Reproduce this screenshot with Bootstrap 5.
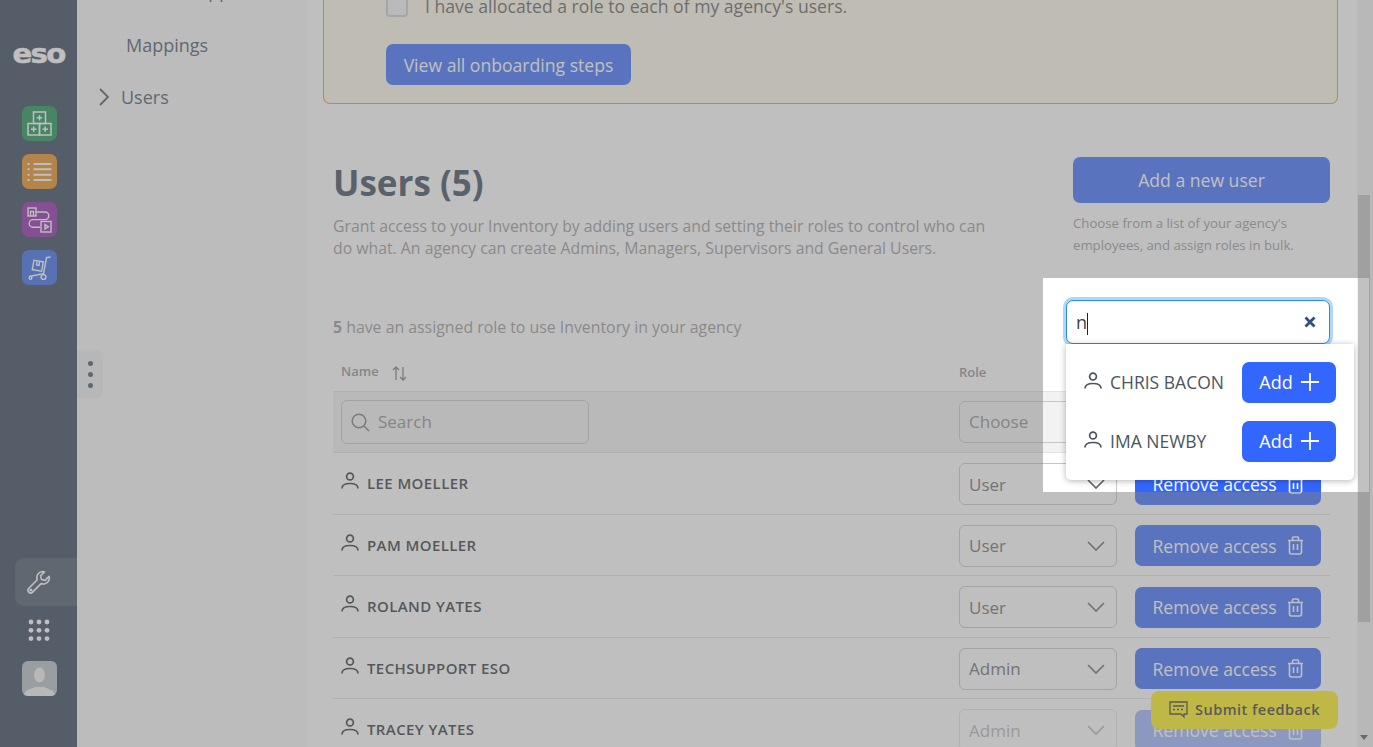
<!DOCTYPE html>
<html lang="en">
<head>
<meta charset="UTF-8">
<title>Users</title>
<link href="https://cdn.jsdelivr.net/npm/bootstrap@5.3.3/dist/css/bootstrap.min.css" rel="stylesheet">
<style>
html, body { height: 100%; overflow: hidden; }
body { font-family: "Open Sans", "Liberation Sans", sans-serif; color: #324456; background: #fff; }
.app-shell { height: 747px; overflow: hidden; position: relative; }
.side-rail { width: 77px; background: #2a3c50; position: relative; }
.rail-logo { font-family: "DejaVu Sans", sans-serif; font-weight: 700; font-size: 26px; line-height: 26px; color: #fff; letter-spacing: -1.5px; text-align: center; margin-top: 41px; transform: scaleX(1.12); -webkit-text-stroke: .5px #fff; }
.rail-app { width: 35px; height: 35px; border-radius: 7px; margin-left: 22px; margin-bottom: 13px; display: flex; align-items: center; justify-content: center; }
.rail-apps { margin-top: 39px; }
.rail-bottom { position: absolute; left: 0; right: 0; top: 558px; }
.rail-tool { margin-left: 15px; height: 48px; border-radius: 9px 0 0 9px; background: #3f5063; padding-left: 12px; display: flex; align-items: center; }
.rail-dots { margin: 13px 0 20px 28px; display: block; }
.rail-avatar { width: 35px; height: 35px; border-radius: 6px; margin-left: 22px; background: #b5bcc0; overflow: hidden; }
.sub-nav { width: 230px; background: #f9f9fb; position: relative; font-size: 18px; color: #3e5060; }
.sub-item { height: 52px; display: flex; align-items: center; }
.sub-cut { margin-top: -33px; padding-bottom: 4px; }
.drag-handle { position: absolute; left: 0; top: 350px; width: 26px; height: 48px; background: #eceef0; border-radius: 0 7px 7px 0; display: flex; flex-direction: column; align-items: center; justify-content: center; gap: 6px; }
.drag-handle span { width: 5px; height: 5px; border-radius: 50%; background: #3e5060; }
.main-pane { width: 1050px; }
.ob-panel { margin: -28px 19px 0 16px; height: 132px; background: #fff8e8; border: 1px solid #d89c34; border-radius: 0 0 7px 7px; border-top: 0; padding: 21px 0 0 62px; font-size: 17.6px; color: #5a5a5a; }
.ob-check { width: 22px; height: 22px; border: 2px solid #c9ccd0; border-radius: 4px; background: #f4f4f4; margin-right: 17px; }
.btn-blue { background: #36f; color: #fff; border: 0; border-radius: 7px; font-size: 17.6px; line-height: 24px; }
.ob-btn { margin-top: 25px; width: 245px; height: 41px; }
.users-wrap { padding: 53px 27px 0 26px; }
.users-title { font-size: 35px; font-weight: 700; line-height: 49px; margin: 1px 0 0; }
.users-desc { font-size: 15.8px; line-height: 22px; color: #949494; margin: 8px 0 0; width: 670px; }
.add-user-btn { width: 257px; height: 46px; }
.add-user-note { font-size: 13.2px; line-height: 22px; color: #949494; margin: 9px 0 0; }
.assign-line { font-size: 15.85px; color: #949494; margin-top: 57px; line-height: 22px; }
.col-name { flex: 1 1 auto; padding-left: 8px; }
.col-role { width: 176px; flex: none; }
.col-act { width: 195px; flex: none; }
.head-row { height: 38px; margin-top: 15px; font-size: 13px; font-weight: 600; color: #8d8d8d; }
.head-row .col-role { padding-top: 2px; }
.sort-icon { margin: 2px 0 0 5px; }
.filter-row { height: 62px; background: #f2f2f2; border-top: 1px solid #e3e3e3; border-bottom: 1px solid #e3e3e3; }
.user-row { height: 61.5px; border-bottom: 1px solid #e3e3e3; font-size: 15px; font-weight: 550; letter-spacing: .4px; color: #2a2f35; }
.user-row .col-role, .user-row .col-act { padding-top: 2px; }
.user-icon { margin-top: -4px; }
.field-box { height: 42px; border: 1px solid #c3c6ca; border-radius: 6px; background: #fff; font-size: 17px; font-weight: 400; letter-spacing: 0; color: #666; padding: 0 9px; display: flex; align-items: center; }
.filter-row .field-box { background: #f2f2f2; color: #8a8a8a; }
.search-box { width: 248px; height: 44px; }
.role-box { width: 158px; justify-content: space-between; padding-right: 11px; }
.remove-btn { width: 186px; height: 41px; display: flex; align-items: center; justify-content: center; gap: 10px; }
.row-faded { opacity: .5; }
.feedback-btn { position: absolute; left: 1151px; top: 691px; width: 187px; height: 38px; background: #fff00c; border-radius: 8px; color: #333; font-size: 14.5px; font-weight: 600; letter-spacing: .5px; display: flex; align-items: center; justify-content: center; gap: 7px; }
.scroll-track { width: 16px; background: #f1f1f1; position: relative; }
.scroll-thumb { position: absolute; left: 1px; width: 12px; top: 195px; height: 427px; background: #c1c1c1; }
.scroll-arrow { position: absolute; left: 3px; bottom: 7px; border: 4px solid transparent; border-top: 5px solid #505050; border-bottom: 0; }
.spotlight { position: absolute; left: 1043px; top: 278px; width: 326px; height: 214px; box-shadow: 0 0 0 2000px rgba(128,128,128,.5); }
.spot-input { position: absolute; left: 23px; top: 22px; width: 264px; height: 44px; background: #fff; border: 1px solid #2e8bd8; border-radius: 7px; box-shadow: 0 0 0 3px #aed8f7; font-size: 18px; color: #444; display: flex; align-items: center; justify-content: space-between; padding: 0 13px 0 9px; }
.spot-caret { display: inline-block; width: 1px; height: 22px; background: #222; vertical-align: middle; }
.spot-menu { position: absolute; left: 23px; top: 66px; width: 288px; height: 136px; background: #fff; border-radius: 0 0 5px 5px; box-shadow: 0 1px 6px rgba(0,0,0,.3); padding: 18px 18px 0 18px; }
.spot-item { height: 41px; margin-bottom: 18px; font-size: 17.5px; color: #4c5561; display: flex; align-items: center; }
.spot-item > svg { margin-top: -3px; }
.spot-add { width: 94px; height: 41px; margin-left: auto; padding-bottom: 2px; font-size: 18px; display: flex; align-items: center; justify-content: center; gap: 8px; }
</style>
</head>
<body>
<div class="app-shell">
  <div class="d-flex h-100">
    <!-- app rail -->
    <div class="side-rail flex-shrink-0">
      <div class="rail-logo">eso</div>
      <div class="rail-apps">
        <div class="rail-app" style="background:#0f8a4a">
          <svg width="25" height="25" viewBox="0 0 25 25" fill="none" stroke="#fff" stroke-width="1.500"><rect x="6.500" y="1" width="12" height="11.500"/><rect x="1" y="12.500" width="11.500" height="11.500"/><rect x="12.500" y="12.500" width="11.500" height="11.500"/><path d="M12.500 4v5.500M9.700 6.700h5.500M6.700 15.500v5.500M4 18.200h5.500M18.200 15.500v5.500M15.500 18.200h5.500"/></svg>
        </div>
        <div class="rail-app" style="background:#e68a14">
          <svg width="25" height="20" viewBox="0 0 25 20" fill="none" stroke="#fff" stroke-width="2"><path d="M6.500 2h18M6.500 7.300h18M6.500 12.700h18M6.500 18h18"/><path d="M0.500 2h2M0.500 7.300h2M0.500 12.700h2M0.500 18h2"/></svg>
        </div>
        <div class="rail-app" style="background:#8a1fa8">
          <svg width="25" height="26" viewBox="0 0 25 26" fill="none" stroke="#fff" stroke-width="1.400"><rect x="1" y="1" width="8" height="8"/><path d="M3.500 9V4.500h3V9"/><path d="M9 5h9a3.800 3.800 0 0 1 0 7.600H6a3.800 3.800 0 0 0 0 7.600h7"/><rect x="14" y="14.500" width="10" height="10.500"/><path d="M18 17.500v4.500l3.400-2.200z"/></svg>
        </div>
        <div class="rail-app" style="background:#2e62e6">
          <svg width="25" height="26" viewBox="0 0 25 26" fill="none" stroke="#fff" stroke-width="1.400"><path d="M23.500 2l-4 .6-3 16L2 21.500"/><rect x="6" y="6" width="9.500" height="9.500" transform="rotate(10 11 11)"/><path d="M10 6.500l-.5 3.500 2.500.4.500-3.500"/><circle cx="16.500" cy="22" r="2.400"/><circle cx="3.500" cy="23" r="1.400"/></svg>
        </div>
      </div>
      <div class="rail-bottom">
        <div class="rail-tool">
          <svg width="24" height="24" viewBox="0 0 24 24" fill="none" stroke="#fff" stroke-width="1.600" stroke-linejoin="round"><path d="M15.500 1.500a6 6 0 0 0-5.200 8.300L1.800 18.300a2.600 2.600 0 0 0 3.800 3.800l8.500-8.500a6 6 0 0 0 8-7.200l-4 4-3.600-1-1-3.500 4-4a6 6 0 0 0-2-.4z"/><circle cx="3.900" cy="20" r=".8"/></svg>
        </div>
        <svg class="rail-dots" width="22" height="22" viewBox="0 0 22 22" fill="#fff"><circle cx="3" cy="3" r="2.400"/><circle cx="11" cy="3" r="2.400"/><circle cx="19" cy="3" r="2.400"/><circle cx="3" cy="11.300" r="2.400"/><circle cx="11" cy="11.300" r="2.400"/><circle cx="19" cy="11.300" r="2.400"/><circle cx="3" cy="19.600" r="2.400"/><circle cx="11" cy="19.600" r="2.400"/><circle cx="19" cy="19.600" r="2.400"/></svg>
        <div class="rail-avatar">
          <svg width="35" height="35" viewBox="0 0 35 35" fill="#f0f0f0"><ellipse cx="17.500" cy="14" rx="5.500" ry="7.500"/><path d="M2 35c0-7 8-7 11-9h9c3 2 11 2 11 9z"/></svg>
        </div>
      </div>
    </div>

    <!-- section nav -->
    <div class="sub-nav flex-shrink-0">
      <div class="sub-item sub-cut">
        <svg style="margin:0 11px 0 22px" width="11" height="18" viewBox="0 0 11 18" fill="none" stroke="#3e5060" stroke-width="1.800"><path d="M1 1l8 8-8 8"/></svg>
        <span>Installed Apps</span>
      </div>
      <div class="sub-item" style="padding-left:49px">Mappings</div>
      <div class="sub-item">
        <svg style="margin:0 11px 0 22px" width="11" height="18" viewBox="0 0 11 18" fill="none" stroke="#3e5060" stroke-width="1.800"><path d="M1 1l8 8-8 8"/></svg>
        <span>Users</span>
      </div>
      <div class="drag-handle"><span></span><span></span><span></span></div>
    </div>

    <!-- main content -->
    <div class="main-pane flex-shrink-0">
      <div class="ob-panel">
        <div class="d-flex align-items-center"><span class="ob-check"></span>I have allocated a role to each of my agency's users.</div>
        <button class="btn-blue ob-btn" type="button">View all onboarding steps</button>
      </div>
      <div class="users-wrap">
        <div class="d-flex justify-content-between">
          <div>
            <h1 class="users-title">Users (5)</h1>
            <p class="users-desc">Grant access to your Inventory by adding users and setting their roles to control who can do what. An agency can create Admins, Managers, Supervisors and General Users.</p>
          </div>
          <div style="width:257px">
            <button class="btn-blue add-user-btn" type="button">Add a new user</button>
            <p class="add-user-note">Choose from a list of your agency's employees, and assign roles in bulk.</p>
          </div>
        </div>
        <div class="assign-line"><b>5</b> have an assigned role to use Inventory in your agency</div>
        <div class="d-flex align-items-center head-row">
          <div class="col-name d-flex align-items-center gap-2">Name
            <svg class="sort-icon" width="15" height="15" viewBox="0 0 15 15" fill="none" stroke="#777" stroke-width="1.300"><path d="M4 14V1M1 4l3-3 3 3M11 1v13M8 11l3 3 3-3"/></svg>
          </div>
          <div class="col-role">Role</div>
          <div class="col-act"></div>
        </div>
        <div class="d-flex align-items-center filter-row">
          <div class="col-name">
            <div class="field-box search-box gap-2">
              <svg width="19" height="19" viewBox="0 0 19 19" fill="none" stroke="#777" stroke-width="1.500"><circle cx="8" cy="8" r="6.800"/><path d="M13 13l5 5"/></svg>
              Search
            </div>
          </div>
          <div class="col-role"><div class="field-box role-box">Choose</div></div>
          <div class="col-act"></div>
        </div>
        <div id="userRows"></div>
      </div>
    </div>

    <div class="scroll-track flex-shrink-0"><div class="scroll-thumb"></div><div class="scroll-arrow"></div></div>
  </div>

  <div class="feedback-btn">
    <svg width="19" height="18" viewBox="0 0 19 18" fill="none" stroke="#333" stroke-width="1.300"><path d="M1 1h17v12h-3v3l-3-3H1z"/><path d="M4 5h11M4 8.500h2M8 8.500h2M12 8.500h2"/></svg>
    Submit feedback
  </div>

  <!-- highlighted step -->
  <div class="spotlight">
    <div class="spot-input">
      <span>n<span class="spot-caret"></span></span>
      <svg width="12" height="12" viewBox="0 0 12 12" fill="none" stroke="#2f4f7f" stroke-width="2.800"><path d="M1.500 1.500l9 9M10.500 1.500l-9 9"/></svg>
    </div>
    <div class="spot-menu">
      <div class="spot-item">
        <svg class="me-2" width="18" height="18" viewBox="0 0 18 18" fill="none" stroke="#4c5561" stroke-width="1.700"><circle cx="9" cy="4.500" r="3.400"/><path d="M1 16.500c0-3.500 3-5 8-5s8 1.500 8 5"/></svg>
        CHRIS BACON
        <button class="btn-blue spot-add" type="button">Add <svg width="18" height="18" viewBox="0 0 18 18" stroke="#fff" stroke-width="1.800"><path d="M9 0v18M0 9h18"/></svg></button>
      </div>
      <div class="spot-item">
        <svg class="me-2" width="18" height="18" viewBox="0 0 18 18" fill="none" stroke="#4c5561" stroke-width="1.700"><circle cx="9" cy="4.500" r="3.400"/><path d="M1 16.500c0-3.500 3-5 8-5s8 1.500 8 5"/></svg>
        IMA NEWBY
        <button class="btn-blue spot-add" type="button">Add <svg width="18" height="18" viewBox="0 0 18 18" stroke="#fff" stroke-width="1.800"><path d="M9 0v18M0 9h18"/></svg></button>
      </div>
    </div>
  </div>
</div>

<script src="https://cdn.jsdelivr.net/npm/bootstrap@5.3.3/dist/js/bootstrap.bundle.min.js"></script>
<script>
  const users = [
    { name: 'LEE MOELLER', role: 'User' },
    { name: 'PAM MOELLER', role: 'User' },
    { name: 'ROLAND YATES', role: 'User' },
    { name: 'TECHSUPPORT ESO', role: 'Admin' },
    { name: 'TRACEY YATES', role: 'Admin', faded: true }
  ];
  const chevron = '<svg width="18" height="10" viewBox="0 0 18 10" fill="none" stroke="#666" stroke-width="1.700"><path d="M1 1l8 8 8-8"/></svg>';
  const person = '<svg class="me-2 user-icon" width="18" height="18" viewBox="0 0 18 18" fill="none" stroke="#2a2f35" stroke-width="1.700"><circle cx="9" cy="4.500" r="3.400"/><path d="M1 16.500c0-3.500 3-5 8-5s8 1.500 8 5"/></svg>';
  const trash = '<svg width="17" height="19" viewBox="0 0 17 19" fill="none" stroke="#fff" stroke-width="1.600"><path d="M1 4.500h15M5.500 4V2a1 1 0 0 1 1-1h4a1 1 0 0 1 1 1v2M2.500 4.500V16a2 2 0 0 0 2 2h8a2 2 0 0 0 2-2V4.500M6.500 8v6M10.500 8v6"/></svg>';
  document.getElementById('userRows').innerHTML = users.map(u => `
    <div class="d-flex align-items-center user-row">
      <div class="col-name d-flex align-items-center">${person}${u.name}</div>
      <div class="col-role"><div class="field-box role-box ${u.faded ? 'row-faded' : ''}">${u.role}${chevron}</div></div>
      <div class="col-act"><button class="btn-blue remove-btn ${u.faded ? 'row-faded' : ''}" type="button">Remove access ${trash}</button></div>
    </div>`).join('');
</script>
</body>
</html>
